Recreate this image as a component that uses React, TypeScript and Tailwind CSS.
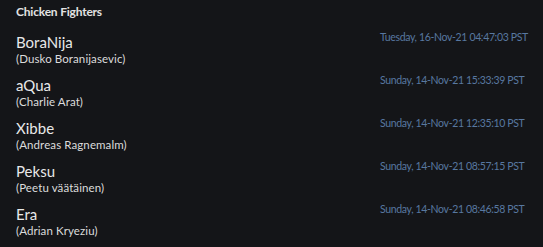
import * as React from "react";

const fighters = [
  { alias: "BoraNija", name: "(Dusko Boranijasevic)", date: "Tuesday, 16-Nov-21 04:47:03 PST" },
  { alias: "aQua", name: "(Charlie Arat)", date: "Sunday, 14-Nov-21 15:33:39 PST" },
  { alias: "Xibbe", name: "(Andreas Ragnemalm)", date: "Sunday, 14-Nov-21 12:35:10 PST" },
  { alias: "Peksu", name: "(Peetu väätäinen)", date: "Sunday, 14-Nov-21 08:57:15 PST" },
  { alias: "Era", name: "(Adrian Kryeziu)", date: "Sunday, 14-Nov-21 08:46:58 PST" },
];

export default function App() {
  return (
    <div
      className="h-[247px] w-[543px] overflow-hidden bg-[#141518] px-4 pt-[4px]"
      style={{ fontFamily: "Lato, 'Open Sans', sans-serif" }}
    >
      <h2 className="text-[12px] font-bold leading-[16px] tracking-[-0.2px] text-[#e2e2e2]">
        Chicken Fighters
      </h2>
      <ul className="mt-[13px] flex flex-col">
        {fighters.map((f) => (
          <li key={f.alias} className="grid h-[43px] grid-cols-[364px_1fr]">
            <div className="flex flex-col">
              <span className="text-[15px] leading-[18px] text-[#e8e8e8]">{f.alias}</span>
              <span className="text-[11.5px] leading-[15px] tracking-[0.1px] text-[#dcdcdc]">{f.name}</span>
            </div>
            <span className="-mt-[3px] whitespace-nowrap text-[10.5px] leading-[14px] tracking-[-0.35px] text-[#5878a0]">
              {f.date}
            </span>
          </li>
        ))}
      </ul>
    </div>
  );
}
